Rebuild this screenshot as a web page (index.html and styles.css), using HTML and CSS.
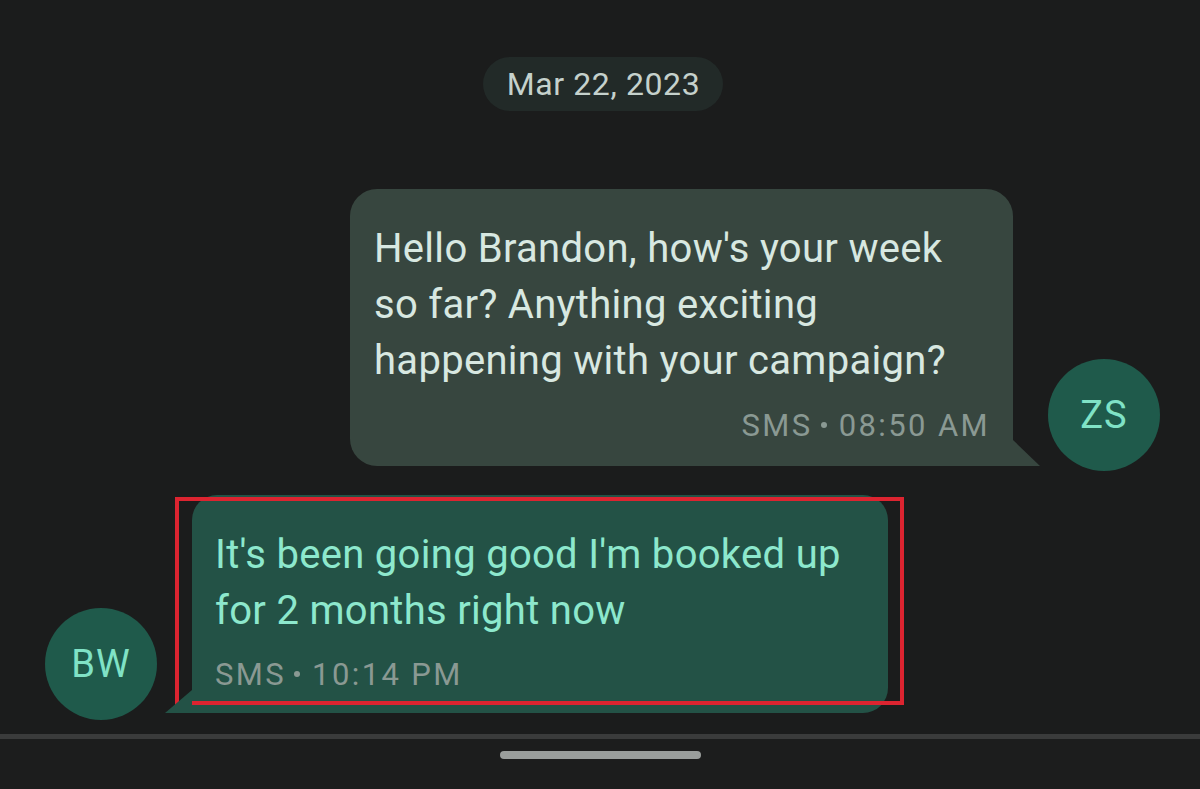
FILE: index.html
```html
<!DOCTYPE html>
<html lang="en">
<head>
  <meta charset="UTF-8" />
  <meta name="viewport" content="width=device-width, initial-scale=1.0" />
  <title>Messages</title>
  <link rel="stylesheet" href="styles.css">
</head>
<body>
  <main class="thread">
    <div class="date-row">
      <span class="date-pill">Mar 22, 2023</span>
    </div>

    <div class="msg-row outgoing">
      <div class="bubble">
        <p class="text">Hello Brandon, how's your week<br>so far? Anything exciting<br>happening with your campaign?</p>
        <div class="meta">SMS<span class="dot"></span>08:50 AM</div>
      </div>
      <div class="avatar">ZS</div>
    </div>

    <div class="msg-row incoming">
      <div class="avatar">BW</div>
      <div class="bubble">
        <p class="text">It's been going good I'm booked up<br>for 2 months right now</p>
        <div class="meta">SMS<span class="dot"></span>10:14 PM</div>
        <!-- annotation box drawn over the reply -->
        <div class="highlight"></div>
      </div>
    </div>
  </main>

  <footer class="nav-bar">
    <div class="home-handle"></div>
  </footer>
</body>
</html>
```

FILE: styles.css
```css
body {
  margin: 0;
  height: 789px;
  display: flex;
  flex-direction: column;
  background-color: #1b1c1c;
  font-family: Roboto, "Noto Sans", sans-serif;
  overflow: hidden;
}
.thread {
  flex: 1;
  padding-top: 57px;
}
.date-row {
  display: flex;
  justify-content: center;
  padding-left: 6px;
  margin-bottom: 78px;
}
.date-pill {
  height: 54px;
  line-height: 54px;
  padding: 0 23px 0 24px;
  border-radius: 27px;
  background-color: #222a28;
  color: #c5d1cc;
  font-size: 32px;
  letter-spacing: 0.6px;
}
.msg-row {
  display: flex;
  align-items: flex-end;
  gap: 35px;
}
.msg-row.outgoing {
  justify-content: flex-end;
  padding-right: 40px;
  margin-bottom: 29px;
}
.msg-row.incoming {
  padding-left: 45px;
}
.avatar {
  width: 112px;
  height: 112px;
  border-radius: 50%;
  background-color: #1f5a4b;
  color: #80e2c6;
  font-size: 38px;
  letter-spacing: 1px;
  display: flex;
  align-items: center;
  justify-content: center;
  flex-shrink: 0;
}
.outgoing .avatar {
  margin-bottom: -5px;
}
.incoming .avatar {
  margin-bottom: -7px;
}
.bubble {
  position: relative;
  box-sizing: border-box;
  padding: 32px 25px 20px 24px;
  border-radius: 27px;
}
.bubble .text {
  margin: 0;
  font-size: 40px;
  line-height: 56px;
  letter-spacing: 0.3px;
}
.meta {
  margin-top: 16px;
  font-size: 31px;
  line-height: 41px;
  letter-spacing: 2.4px;
  color: #8a9993;
}
.meta .dot {
  display: inline-block;
  width: 6px;
  height: 6px;
  margin: 0 12px 0 8px;
  border-radius: 50%;
  background-color: currentColor;
  vertical-align: 8px;
}
.outgoing .bubble {
  width: 663px;
  background-color: #37463f;
  border-bottom-right-radius: 0;
}
.outgoing .bubble .text {
  color: #d8e8e1;
}
.outgoing .meta {
  text-align: right;
  margin-right: -2px;
}
.outgoing .bubble::after {
  content: "";
  position: absolute;
  right: -27px;
  bottom: 0;
  width: 27px;
  height: 26px;
  background-color: #37463f;
  clip-path: polygon(0 0, 100% 100%, 0 100%);
}
.incoming .bubble {
  width: 696px;
  padding: 32px 23px 18px 23px;
  background-color: #235246;
  border-radius: 25px;
  border-bottom-left-radius: 0;
}
.incoming .bubble .text {
  color: #8de8cd;
}
.incoming .meta {
  margin-top: 15px;
}
.incoming .bubble::after {
  content: "";
  position: absolute;
  left: -27px;
  bottom: 0;
  width: 27px;
  height: 23px;
  background-color: #235246;
  clip-path: polygon(100% 0, 100% 100%, 0 100%);
}
.highlight {
  position: absolute;
  left: -17px;
  right: -16px;
  top: 2px;
  bottom: 8px;
  border: 4px solid #dc2430;
}
.nav-bar {
  height: 50px;
  border-top: 5px solid #3a3b3b;
  background-color: #1c1d1d;
  display: flex;
  justify-content: center;
}
.home-handle {
  width: 201px;
  height: 8px;
  margin-top: 12px;
  border-radius: 4px;
  background-color: #9a9e9c;
}
```
